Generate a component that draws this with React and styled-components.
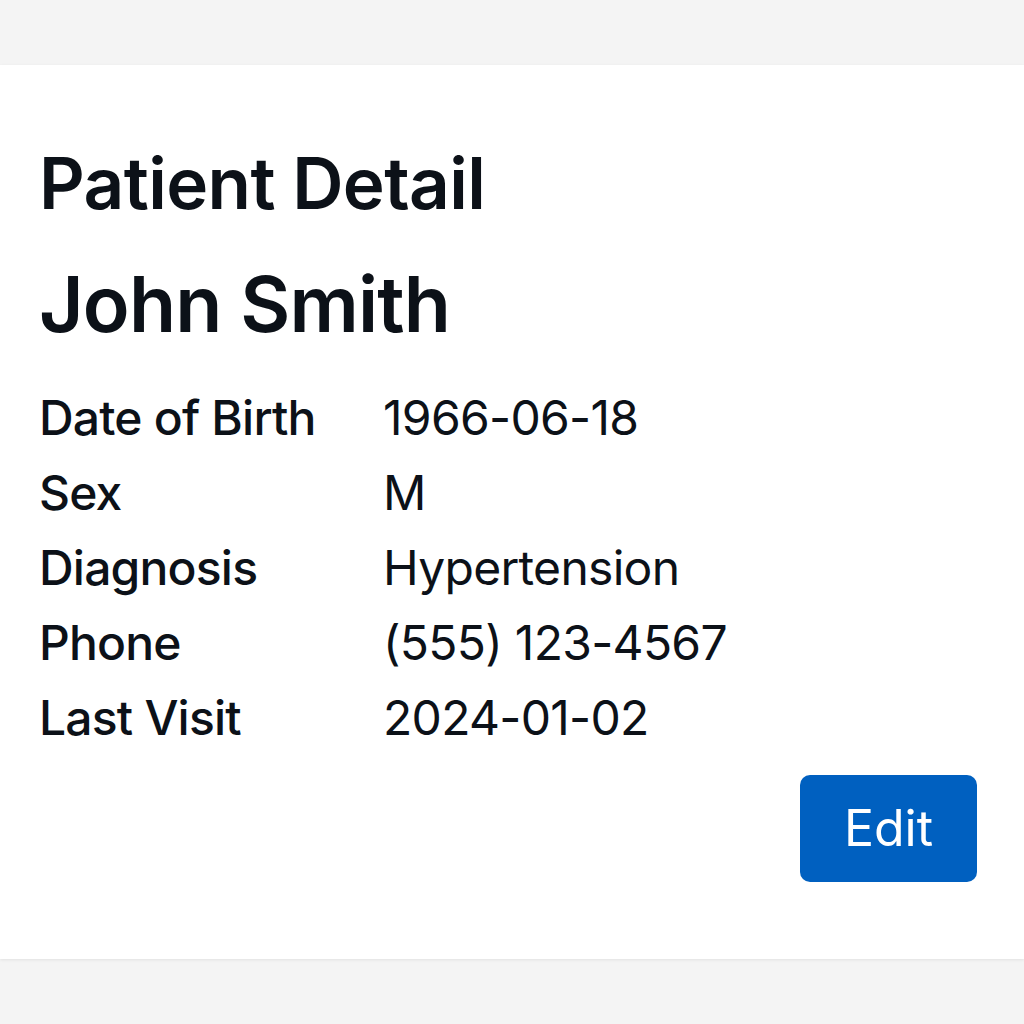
import React from "react";
import styled, { createGlobalStyle } from "styled-components";

const Global = createGlobalStyle`
  html, body {
    margin: 0;
    padding: 0;
    background: #f4f4f4;
    font-family: Inter, "Noto Sans", sans-serif;
    color: #0c1118;
  }
`;

const Page = styled.div`
  padding-top: 65px;
  min-height: 1024px;
  box-sizing: border-box;
`;

const Card = styled.section`
  background: #ffffff;
  box-shadow: 0 1px 3px rgba(0, 0, 0, 0.08);
  padding: 76px 47px 77px 39px;
  display: flex;
  flex-direction: column;
`;

const Title = styled.h1`
  margin: 0;
  font-size: 71px;
  line-height: 1.2;
  font-weight: 600;
  letter-spacing: -0.6px;
`;

const Name = styled.h2`
  margin: 32px 0 0;
  font-size: 77px;
  line-height: 1.2;
  font-weight: 600;
  letter-spacing: -0.8px;
`;

const Details = styled.dl`
  margin: 29px 0 0;
  display: grid;
  grid-template-columns: 344px auto;
  font-size: 48px;
  line-height: 75px;
`;

const Label = styled.dt`
  font-weight: 550;
  letter-spacing: -0.8px;
`;

const Value = styled.dd`
  margin: 0;
  font-weight: 400;
  letter-spacing: -0.7px;
`;

const Actions = styled.div`
  margin-top: 20px;
  display: flex;
  justify-content: flex-end;
`;

const Button = styled.button`
  width: 177px;
  height: 107px;
  border: none;
  border-radius: 10px;
  background: #0060c0;
  color: #ffffff;
  font-family: Inter, "Noto Sans", sans-serif;
  font-size: 50px;
  font-weight: 400;
  cursor: pointer;
  display: flex;
  align-items: center;
  justify-content: center;
`;

const rows = [
  ["Date of Birth", "1966-06-18"],
  ["Sex", "M"],
  ["Diagnosis", "Hypertension"],
  ["Phone", "(555) 123-4567"],
  ["Last Visit", "2024-01-02"],
];

export default function App() {
  return (
    <>
      <Global />
      <Page>
        <Card>
          <Title>Patient Detail</Title>
          <Name>John Smith</Name>
          <Details>
            {rows.map(([k, v]) => (
              <React.Fragment key={k}>
                <Label>{k}</Label>
                <Value>{v}</Value>
              </React.Fragment>
            ))}
          </Details>
          <Actions>
            <Button>Edit</Button>
          </Actions>
        </Card>
      </Page>
    </>
  );
}
